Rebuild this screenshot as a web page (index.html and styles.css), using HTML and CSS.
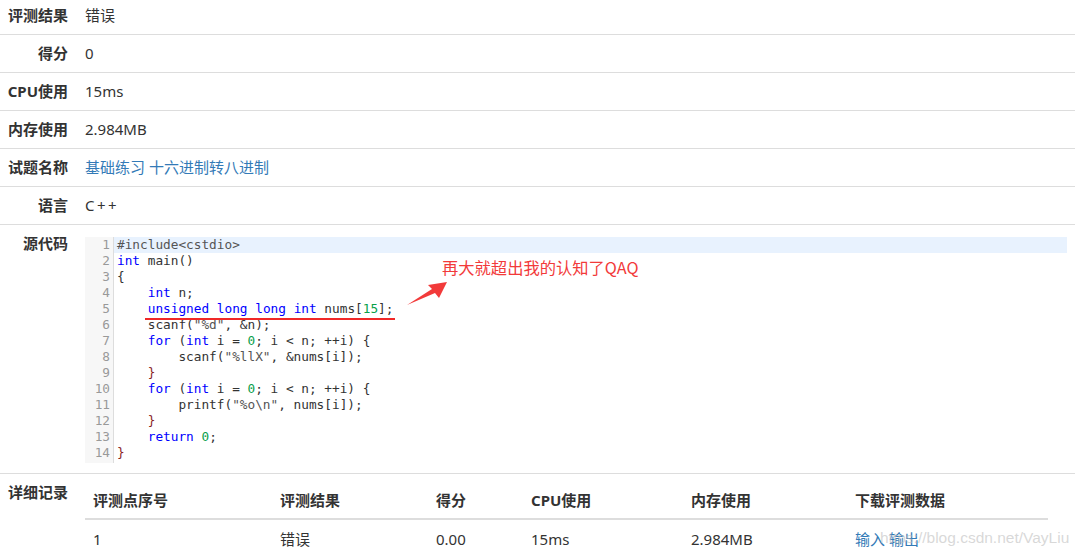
FILE: index.html
```html
<!DOCTYPE html>
<html>
<head>
<meta charset="utf-8">
<link rel="stylesheet" href="styles.css">
</head>
<body>
<div class="page">
  <div class="row first">
    <div class="label">评测结果</div>
    <div class="value">错误</div>
  </div>
  <div class="row">
    <div class="label">得分</div>
    <div class="value">0</div>
  </div>
  <div class="row">
    <div class="label">CPU使用</div>
    <div class="value">15ms</div>
  </div>
  <div class="row">
    <div class="label">内存使用</div>
    <div class="value">2.984MB</div>
  </div>
  <div class="row">
    <div class="label">试题名称</div>
    <div class="value"><a class="link" href="#">基础练习 十六进制转八进制</a></div>
  </div>
  <div class="row">
    <div class="label">语言</div>
    <div class="value"><span class="lang">C++</span></div>
  </div>
  <div class="row">
    <div class="label">源代码</div>
    <div class="value code-cell">
      <div class="code">
        <div class="gutter">
          <div>1</div><div>2</div><div>3</div><div>4</div><div>5</div><div>6</div><div>7</div>
          <div>8</div><div>9</div><div>10</div><div>11</div><div>12</div><div>13</div><div>14</div>
        </div>
        <div class="lines">
<div class="ln active"><span class="pp">#include&lt;cstdio&gt;</span></div>
<div class="ln"><span class="kw">int</span> main()</div>
<div class="ln">{</div>
<div class="ln">    <span class="kw">int</span> n;</div>
<div class="ln">    <span class="kw">unsigned</span> <span class="kw">long</span> <span class="kw">long</span> <span class="kw">int</span> nums[<span class="num">15</span>];</div>
<div class="ln">    scanf(<span class="str">"%d"</span>, &amp;n);</div>
<div class="ln">    <span class="kw">for</span> (<span class="kw">int</span> i = <span class="num">0</span>; i &lt; n; ++i) {</div>
<div class="ln">        scanf(<span class="str">"%llX"</span>, &amp;nums[i]);</div>
<div class="ln">    <span class="br">}</span></div>
<div class="ln">    <span class="kw">for</span> (<span class="kw">int</span> i = <span class="num">0</span>; i &lt; n; ++i) {</div>
<div class="ln">        printf(<span class="str">"%o\n"</span>, nums[i]);</div>
<div class="ln">    <span class="br">}</span></div>
<div class="ln">    <span class="kw">return</span> <span class="num">0</span>;</div>
<div class="ln"><span class="br">}</span></div>
        </div>
        <div class="mark-line"></div>
        <div class="note">再大就超出我的认知了QAQ</div>
        <svg class="arrow" width="46" height="28" viewBox="0 0 46 28">
          <polygon points="2,25 27,9 23,5 42,2 34,18 30,13" fill="#f23a3a"/>
        </svg>
      </div>
    </div>
  </div>
  <div class="row last">
    <div class="label">详细记录</div>
    <div class="value">
      <table class="records">
        <thead>
          <tr>
            <th class="c1">评测点序号</th>
            <th class="c2">评测结果</th>
            <th class="c3">得分</th>
            <th class="c4">CPU使用</th>
            <th class="c5">内存使用</th>
            <th class="c6">下载评测数据</th>
          </tr>
        </thead>
        <tbody>
          <tr>
            <td>1</td>
            <td>错误</td>
            <td>0.00</td>
            <td>15ms</td>
            <td>2.984MB</td>
            <td><a class="link" href="#">输入</a> <a class="link" href="#">输出</a></td>
          </tr>
        </tbody>
      </table>
    </div>
  </div>
</div>
<div class="watermark">https://blog.csdn.net/VayLiu</div>
</body>
</html>
```
FILE: styles.css
```css
html, body {
  margin: 0;
  padding: 0;
  background: #fff;
}
body {
  font-family: "Noto Sans", "Noto Sans CJK SC", sans-serif;
  font-size: 15px;
  color: #333;
  position: relative;
  overflow: hidden;
  height: 560px;
}
.page {
  width: 1075px;
}
.row {
  display: flex;
  border-bottom: 1px solid #ddd;
  line-height: 21px;
}
.row.last {
  border-bottom: none;
}
.label {
  width: 68px;
  flex: none;
  text-align: right;
  font-weight: bold;
  padding: 8px 0;
  white-space: nowrap;
}
.value {
  flex: 1;
  padding: 8px 0 8px 17px;
}
.row.first .label,
.row.first .value {
  padding-top: 5px;
}
.lang {
  letter-spacing: 2.5px;
}
.link {
  color: #337ab7;
  text-decoration: none;
}
.code-cell {
  padding: 12px 8px 10px 17px;
}
.code {
  position: relative;
  display: flex;
  font-family: "DejaVu Sans Mono", "Liberation Mono", monospace;
  font-size: 12.75px;
  line-height: 16px;
  color: #333;
  padding-bottom: 2px;
}
.gutter {
  width: 25px;
  flex: none;
  background: #f7f7f7;
  border-right: 1px solid #ddd;
  color: #999;
  text-align: right;
  padding-right: 3px;
  margin-bottom: -2px;
  padding-bottom: 2px;
}
.lines {
  flex: 1;
}
.ln {
  white-space: pre;
  padding-left: 3px;
  height: 16px;
}
.ln.active {
  background: #e8f2fe;
}
.kw { color: #0000ff; }
.num { color: #09a04a; }
.str { color: #555; }
.pp { color: #555; }
.br { color: #8a1f1f; }
.mark-line {
  position: absolute;
  left: 60px;
  top: 81px;
  width: 250px;
  height: 2px;
  background: #f02828;
}
.note {
  position: absolute;
  left: 357px;
  top: 20px;
  font-family: "Noto Sans CJK SC", sans-serif;
  font-size: 16.3px;
  line-height: 20px;
  color: #f23a3a;
  white-space: nowrap;
}
.arrow {
  position: absolute;
  left: 320px;
  top: 43px;
}
.records {
  border-collapse: collapse;
  width: 963px;
  line-height: 20px;
}
.records th {
  text-align: left;
  font-weight: bold;
  padding: 8px;
  border-bottom: 2px solid #ddd;
}
.records td {
  padding: 9px 8px 8px;
}
.c1 { width: 171px; }
.c2 { width: 140px; }
.c3 { width: 79px; }
.c4 { width: 144px; }
.c5 { width: 148px; }
.c6 { width: auto; }
.watermark {
  position: absolute;
  left: 880px;
  top: 529px;
  font-family: "Liberation Sans", sans-serif;
  font-size: 15.5px;
  color: rgba(190, 190, 190, 0.6);
  white-space: nowrap;
}
```
